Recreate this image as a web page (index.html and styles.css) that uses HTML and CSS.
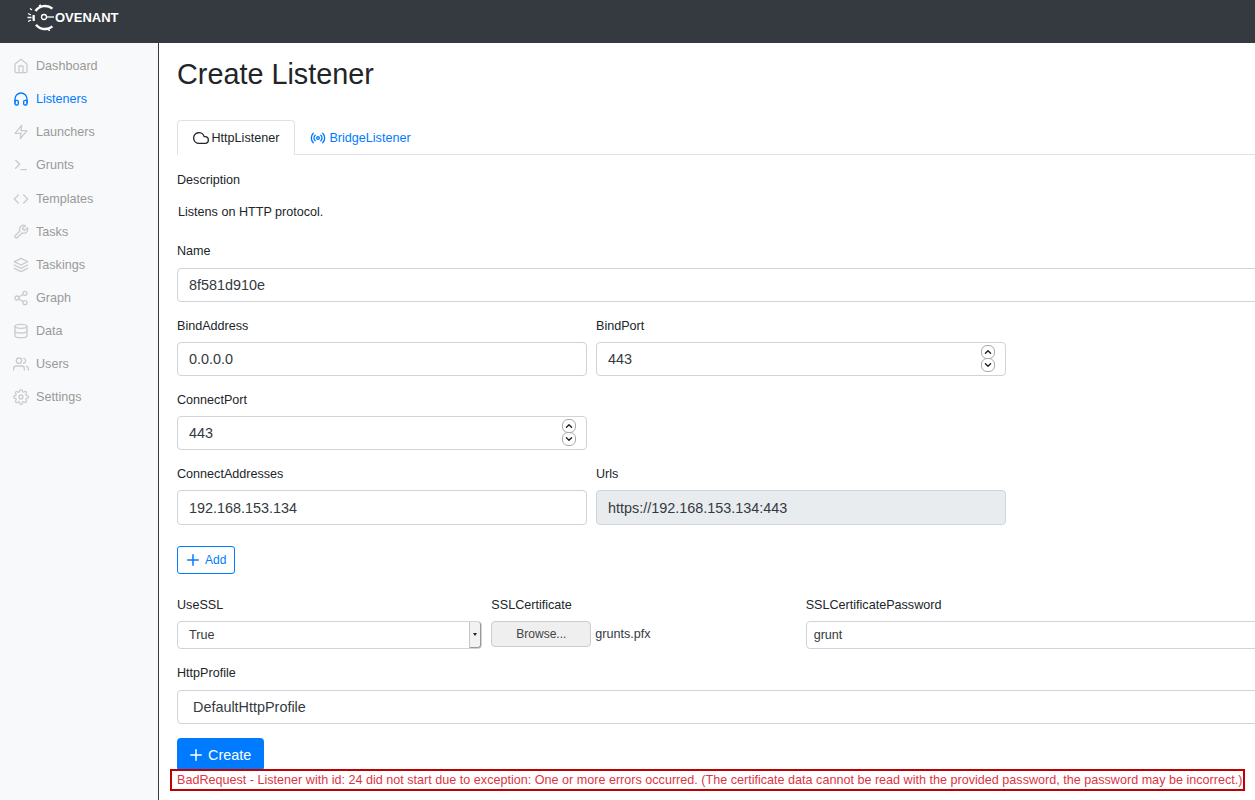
FILE: index.html
```html
<!DOCTYPE html>
<html lang="en">
<head>
<meta charset="utf-8">
<title>Create Listener</title>
<link rel="stylesheet" href="styles.css">
</head>
<body>
<svg class="sprite" width="0" height="0" aria-hidden="true">
  <symbol id="i-home" viewBox="0 0 24 24"><path d="M3 9l9-7 9 7v11a2 2 0 0 1-2 2H5a2 2 0 0 1-2-2z"/><path d="M9 22V12h6v10"/></symbol>
  <symbol id="i-headphones" viewBox="0 0 24 24"><path d="M3 18v-6a9 9 0 0 1 18 0v6"/><path d="M21 19a2 2 0 0 1-2 2h-1a2 2 0 0 1-2-2v-3a2 2 0 0 1 2-2h3zM3 19a2 2 0 0 0 2 2h1a2 2 0 0 0 2-2v-3a2 2 0 0 0-2-2H3z"/></symbol>
  <symbol id="i-zap" viewBox="0 0 24 24"><path d="M13 2L3 14h9l-1 8 10-12h-9l1-8z"/></symbol>
  <symbol id="i-terminal" viewBox="0 0 24 24"><path d="M4 17l6-6-6-6"/><path d="M12 19h8"/></symbol>
  <symbol id="i-code" viewBox="0 0 24 24"><path d="M16 18l6-6-6-6"/><path d="M8 6l-6 6 6 6"/></symbol>
  <symbol id="i-tool" viewBox="0 0 24 24"><path d="M14.7 6.3a1 1 0 0 0 0 1.4l1.6 1.6a1 1 0 0 0 1.4 0l3.77-3.77a6 6 0 0 1-7.94 7.94l-6.91 6.91a2.12 2.12 0 0 1-3-3l6.91-6.91a6 6 0 0 1 7.94-7.94l-3.76 3.76z"/></symbol>
  <symbol id="i-layers" viewBox="0 0 24 24"><path d="M12 2L2 7l10 5 10-5-10-5z"/><path d="M2 17l10 5 10-5"/><path d="M2 12l10 5 10-5"/></symbol>
  <symbol id="i-share" viewBox="0 0 24 24"><circle cx="18" cy="5" r="3"/><circle cx="6" cy="12" r="3"/><circle cx="18" cy="19" r="3"/><path d="M8.59 13.51l6.83 3.98"/><path d="M15.41 6.51l-6.82 3.98"/></symbol>
  <symbol id="i-database" viewBox="0 0 24 24"><ellipse cx="12" cy="5" rx="9" ry="3"/><path d="M21 12c0 1.66-4 3-9 3s-9-1.34-9-3"/><path d="M3 5v14c0 1.66 4 3 9 3s9-1.34 9-3V5"/></symbol>
  <symbol id="i-users" viewBox="0 0 24 24"><path d="M17 21v-2a4 4 0 0 0-4-4H5a4 4 0 0 0-4 4v2"/><circle cx="9" cy="7" r="4"/><path d="M23 21v-2a4 4 0 0 0-3-3.87"/><path d="M16 3.13a4 4 0 0 1 0 7.75"/></symbol>
  <symbol id="i-settings" viewBox="0 0 24 24"><circle cx="12" cy="12" r="3"/><path d="M19.4 15a1.65 1.65 0 0 0 .33 1.82l.06.06a2 2 0 1 1-2.83 2.83l-.06-.06a1.65 1.65 0 0 0-1.82-.33 1.65 1.65 0 0 0-1 1.51V21a2 2 0 1 1-4 0v-.09A1.65 1.65 0 0 0 9 19.4a1.65 1.65 0 0 0-1.82.33l-.06.06a2 2 0 1 1-2.83-2.83l.06-.06a1.65 1.65 0 0 0 .33-1.82 1.65 1.65 0 0 0-1.51-1H3a2 2 0 1 1 0-4h.09A1.65 1.65 0 0 0 4.6 9a1.65 1.65 0 0 0-.33-1.82l-.06-.06a2 2 0 1 1 2.83-2.83l.06.06a1.65 1.65 0 0 0 1.82.33H9a1.65 1.65 0 0 0 1-1.51V3a2 2 0 1 1 4 0v.09a1.65 1.65 0 0 0 1 1.51 1.65 1.65 0 0 0 1.82-.33l.06-.06a2 2 0 1 1 2.83 2.83l-.06.06a1.65 1.65 0 0 0-.33 1.82V9a1.65 1.65 0 0 0 1.51 1H21a2 2 0 1 1 0 4h-.09a1.65 1.65 0 0 0-1.51 1z"/></symbol>
  <symbol id="i-cloud" viewBox="0 0 24 24"><path d="M18 10h-1.26A8 8 0 1 0 9 20h9a5 5 0 0 0 0-10z"/></symbol>
  <symbol id="i-radio" viewBox="0 0 24 24"><circle cx="12" cy="12" r="2"/><path d="M16.24 7.76a6 6 0 0 1 0 8.49m-8.48-.01a6 6 0 0 1 0-8.49m11.31-2.82a10 10 0 0 1 0 14.14m-14.14 0a10 10 0 0 1 0-14.14"/></symbol>
  <symbol id="i-plus" viewBox="0 0 24 24"><path d="M12 5v14"/><path d="M5 12h14"/></symbol>
  <symbol id="i-up" viewBox="0 0 13 14"><path d="M3.5 8.5l3-3 3 3"/></symbol>
  <symbol id="i-down" viewBox="0 0 13 14"><path d="M3.5 5.5l3 3 3-3"/></symbol>
</svg>

<header class="topbar">
  <a class="brand">
    <svg class="brand-mark" viewBox="0 0 28 27" aria-hidden="true">
      <path class="mark-ring" d="M25.4 4.7A11.5 11.5 0 0 0 8.5 7"/>
      <path class="mark-ring" d="M6.8 11A11.5 11.5 0 0 0 7 16.8"/>
      <path class="mark-ring" d="M9 20.8A11.5 11.5 0 0 0 25.4 22.3"/>
      <path class="mark-thin" d="M1 9.5l3 1.5M0.500 13.500h4M1 17.500l3-1.500M5 6l-2-1.500M12 1.800l2-1M21 25.600l2 1"/>
      <circle class="mark-thin" cx="17" cy="13" r="2.500"/>
      <path class="mark-thin" d="M19.500 13H27"/>
    </svg>
    <span class="brand-text">OVENANT</span>
  </a>
</header>

<div class="shell">
  <nav class="sidebar">
    <a class="nav-item"><svg class="ico nav-ico"><use href="#i-home"/></svg>Dashboard</a>
    <a class="nav-item is-active"><svg class="ico nav-ico"><use href="#i-headphones"/></svg>Listeners</a>
    <a class="nav-item"><svg class="ico nav-ico"><use href="#i-zap"/></svg>Launchers</a>
    <a class="nav-item"><svg class="ico nav-ico"><use href="#i-terminal"/></svg>Grunts</a>
    <a class="nav-item"><svg class="ico nav-ico"><use href="#i-code"/></svg>Templates</a>
    <a class="nav-item"><svg class="ico nav-ico"><use href="#i-tool"/></svg>Tasks</a>
    <a class="nav-item"><svg class="ico nav-ico"><use href="#i-layers"/></svg>Taskings</a>
    <a class="nav-item"><svg class="ico nav-ico"><use href="#i-share"/></svg>Graph</a>
    <a class="nav-item"><svg class="ico nav-ico"><use href="#i-database"/></svg>Data</a>
    <a class="nav-item"><svg class="ico nav-ico"><use href="#i-users"/></svg>Users</a>
    <a class="nav-item"><svg class="ico nav-ico"><use href="#i-settings"/></svg>Settings</a>
  </nav>

  <main class="content">
    <h1 class="title">Create Listener</h1>

    <div class="tabs">
      <a class="tab is-current"><svg class="ico tab-ico"><use href="#i-cloud"/></svg>HttpListener</a>
      <a class="tab"><svg class="ico tab-ico"><use href="#i-radio"/></svg>BridgeListener</a>
    </div>

    <div class="label label-desc">Description</div>
    <p class="desc">Listens on HTTP protocol.</p>

    <div class="field field-name">
      <label class="label">Name</label>
      <div class="input">8f581d910e</div>
    </div>

    <div class="row">
      <div class="field half">
        <label class="label">BindAddress</label>
        <div class="input">0.0.0.0</div>
      </div>
      <div class="field half">
        <label class="label">BindPort</label>
        <div class="input input-num">443<span class="spin"><i class="spin-btn"><svg class="ico spin-ico"><use href="#i-up"/></svg></i><i class="spin-btn"><svg class="ico spin-ico"><use href="#i-down"/></svg></i></span></div>
      </div>
    </div>

    <div class="row">
      <div class="field half">
        <label class="label">ConnectPort</label>
        <div class="input input-num">443<span class="spin"><i class="spin-btn"><svg class="ico spin-ico"><use href="#i-up"/></svg></i><i class="spin-btn"><svg class="ico spin-ico"><use href="#i-down"/></svg></i></span></div>
      </div>
    </div>

    <div class="row">
      <div class="field half">
        <label class="label">ConnectAddresses</label>
        <div class="input input-tall">192.168.153.134</div>
      </div>
      <div class="field half">
        <label class="label">Urls</label>
        <div class="input input-tall input-readonly">https://192.168.153.134:443</div>
      </div>
    </div>

    <a class="btn-add"><svg class="ico add-ico"><use href="#i-plus"/></svg>Add</a>

    <div class="row row-ssl">
      <div class="field third">
        <label class="label">UseSSL</label>
        <div class="select">True<span class="select-arrow"></span></div>
      </div>
      <div class="field third">
        <label class="label">SSLCertificate</label>
        <div class="file"><span class="browse">Browse...</span><span class="file-name">grunts.pfx</span></div>
      </div>
      <div class="field third-last">
        <label class="label">SSLCertificatePassword</label>
        <div class="select select-plain">grunt</div>
      </div>
    </div>

    <div class="field field-profile">
      <label class="label">HttpProfile</label>
      <div class="input input-profile">DefaultHttpProfile</div>
    </div>

    <a class="btn-create"><svg class="ico create-ico"><use href="#i-plus"/></svg>Create</a>

    <div class="error">BadRequest - Listener with id: 24 did not start due to exception: One or more errors occurred. (The certificate data cannot be read with the provided password, the password may be incorrect.)</div>
  </main>
</div>
</body>
</html>
```
FILE: styles.css
```css
* { box-sizing: border-box; }
html, body { height: 100%; }
body {
  margin: 0;
  height: 800px;
  overflow: hidden;
  background: #fff;
  color: #212529;
  font-family: "Liberation Sans", Arial, sans-serif;
  font-size: 12.6px;
  display: flex;
  flex-direction: column;
}
.sprite { position: absolute; }
.ico {
  fill: none;
  stroke: currentColor;
  stroke-width: 2;
  stroke-linecap: round;
  stroke-linejoin: round;
  flex: none;
}

.topbar {
  height: 43px;
  flex: none;
  background: #343a40;
  padding: 4px 0 0 27px;
}
.brand { display: flex; align-items: flex-start; color: #fff; }
.brand-mark { width: 28px; height: 27px; flex: none; }
.mark-ring { fill: none; stroke: #fff; stroke-width: 2.4; }
.mark-thin { fill: none; stroke: #fff; stroke-width: 1.3; }
.brand-text {
  font-size: 13px;
  line-height: 18px;
  font-weight: 700;
  margin-top: 5px;
}

.shell { display: flex; flex: 1; min-height: 0; }
.sidebar {
  width: 159px;
  flex: none;
  background: #f8f9fa;
  border-right: 1px solid #343a40;
  padding-top: 6.4px;
}
.nav-item {
  height: 33.15px;
  display: flex;
  align-items: center;
  padding-left: 13px;
  color: #999;
}
.nav-ico { width: 16px; height: 16px; margin-right: 7px; color: #ccc; }
.nav-item.is-active { color: #007bff; }
.nav-item.is-active .nav-ico { color: #007bff; }

.content { flex: 1; min-width: 0; padding: 0 0 0 18px; overflow: hidden; }
.title {
  margin: 13px 0 0;
  font-size: 28.8px;
  font-weight: 400;
  line-height: 36px;
  color: #212529;
}

.tabs {
  display: flex;
  margin-top: 28px;
  height: 35px;
  border-bottom: 1px solid #dee2e6;
  margin-right: -20px;
}
.tab {
  display: flex;
  align-items: center;
  padding: 0 14.5px;
  height: 35px;
  color: #007bff;
  border: 1px solid transparent;
  border-radius: 4px 4px 0 0;
}
.tab.is-current {
  color: #212529;
  background: #fff;
  border-color: #dee2e6 #dee2e6 #fff;
}
.tab-ico { width: 16px; height: 16px; margin-right: 3px; }

.label { display: block; line-height: 16px; color: #212529; }
.label-desc { margin-top: 17px; }
.desc { margin: 16px 0 0 1px; line-height: 16px; }

.field { display: flex; flex-direction: column; gap: 8px; }
.field-name { margin-top: 23px; margin-right: -20px; gap: 9px; }
.row { display: flex; gap: 9px; margin-top: 16px; }
.half { width: 410px; flex: none; }
.third { width: 305.33px; flex: none; }
.third-last { width: 470px; flex: none; }
.row-ssl { margin-top: 23px; }

.input {
  height: 34px;
  border: 1px solid #ced4da;
  border-radius: 4px;
  padding: 0 11px;
  display: flex;
  align-items: center;
  font-size: 14.4px;
  color: #343a40;
  background: #fff;
}
.input-tall { height: 35px; }
.input-readonly { background: #e9ecef; }
.input-num { position: relative; }
.spin {
  position: absolute;
  right: 10px;
  top: 2px;
  display: flex;
  flex-direction: column;
}
.spin-btn {
  display: block;
  width: 14px;
  height: 14px;
  margin-top: -1px;
  border: 1px solid #aaa;
  border-radius: 6px;
  background: #fff;
}
.spin-btn:first-child { margin-top: 0; }
.spin-ico { display: block; width: 12px; height: 12px; color: #222; stroke-width: 1.6; }

.btn-add {
  margin-top: 21px;
  width: 58px;
  height: 28px;
  display: flex;
  align-items: center;
  padding-left: 6px;
  border: 1px solid #007bff;
  border-radius: 3px;
  color: #007bff;
  font-size: 12px;
}
.add-ico { width: 18px; height: 18px; margin-right: 3px; }

.select {
  position: relative;
  height: 28px;
  border: 1px solid #ced4da;
  border-radius: 4px;
  padding: 0 11px 1px;
  display: flex;
  align-items: center;
  color: #343a40;
  background: #fff;
}
.select-plain { padding: 0 7px 1px; }
.select-arrow {
  position: absolute;
  right: 0;
  top: 0;
  bottom: 0;
  width: 12px;
  border-left: 1px solid #c5c5c5;
  border-right: 1px solid #999;
  border-bottom: 1px solid #999;
  background: #f2f2f2;
  border-radius: 0 3px 3px 0;
}
.select-arrow::after {
  content: "";
  position: absolute;
  left: 3px;
  top: 11px;
  border: 2.5px solid transparent;
  border-top: 3px solid #222;
}
.file { display: flex; align-items: center; height: 28px; gap: 4px; }
.browse {
  width: 100px;
  height: 26px;
  display: flex;
  align-items: center;
  justify-content: center;
  border: 1px solid #ccc;
  border-radius: 4px;
  background: #efefef;
  font-size: 12px;
  color: #444;
  margin-top: -2px;
}
.file-name { color: #343a40; margin-top: -2px; }

.field-profile { margin-top: 16px; margin-right: -20px; gap: 9px; }
.input-profile { padding-left: 15px; }

.btn-create {
  margin-top: 14px;
  width: 87px;
  height: 33px;
  display: flex;
  align-items: center;
  padding-left: 10px;
  background: #007bff;
  color: #fff;
  border-radius: 4px;
  font-size: 14.4px;
}
.create-ico { width: 18px; height: 18px; margin-right: 3px; }

.error {
  position: relative;
  margin: -2px 0 0 -7px;
  width: 1075px;
  height: 22px;
  border: 2px solid #c00000;
  padding-left: 5px;
  display: flex;
  align-items: center;
  color: #dc3545;
  white-space: nowrap;
}
```
